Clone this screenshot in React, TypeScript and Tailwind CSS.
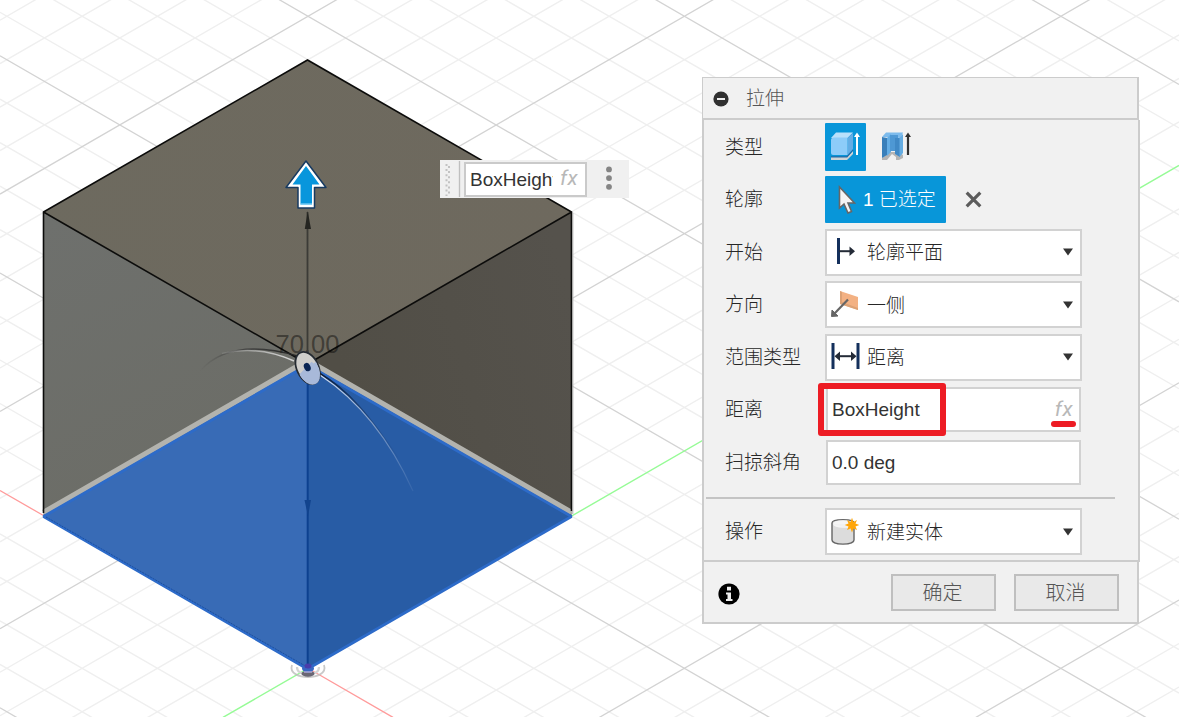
import type { ReactNode } from 'react';

const ORIGIN = { x: 308, y: 668.3 };
const SLOPE = 0.5774;
const STEP = 43.47;

function gridLines() {
  const minor: string[] = [];
  const major: string[] = [];
  for (let k = -32; k <= 18; k++) {
    const base = ORIGIN.y + k * STEP;
    const left = ORIGIN.x * SLOPE;
    const right = (1179 - ORIGIN.x) * SLOPE;
    const target = k % 5 === 0 ? major : minor;
    if (k === 0) continue;
    target.push(`M0 ${base - left}L1179 ${base + right}`);
    target.push(`M0 ${base + left}L1179 ${base - right}`);
  }
  return { minor: minor.join(''), major: major.join('') };
}

const grid = gridLines();

function Scene() {
  return (
    <svg className="absolute inset-0" width="1179" height="717" viewBox="0 0 1179 717" fill="none">
      <defs>
        <linearGradient id="topFace" x1="43" y1="60" x2="571" y2="240" gradientUnits="userSpaceOnUse">
          <stop offset="0" stopColor="#6d6a5f" />
          <stop offset="1" stopColor="#6e695e" />
        </linearGradient>
        <linearGradient id="leftFace" x1="43" y1="220" x2="180" y2="480" gradientUnits="userSpaceOnUse">
          <stop offset="0" stopColor="#6e706d" />
          <stop offset="1" stopColor="#6c6d67" />
        </linearGradient>
        <linearGradient id="rightFace" x1="340" y1="360" x2="571" y2="300" gradientUnits="userSpaceOnUse">
          <stop offset="0" stopColor="#514e46" />
          <stop offset="1" stopColor="#55524c" />
        </linearGradient>
        <linearGradient id="arcLeft" x1="200" y1="0" x2="300" y2="0" gradientUnits="userSpaceOnUse">
          <stop offset="0" stopColor="#333" stopOpacity="0" />
          <stop offset="0.5" stopColor="#333" stopOpacity="0.75" />
          <stop offset="1" stopColor="#222" />
        </linearGradient>
        <linearGradient id="arcLeftLight" x1="210" y1="0" x2="285" y2="0" gradientUnits="userSpaceOnUse">
          <stop offset="0" stopColor="#ccc" stopOpacity="0" />
          <stop offset="1" stopColor="#ddd" stopOpacity="0.9" />
        </linearGradient>
        <linearGradient id="arcRight" x1="320" y1="375" x2="400" y2="465" gradientUnits="userSpaceOnUse">
          <stop offset="0" stopColor="#0b1c38" />
          <stop offset="1" stopColor="#173d75" stopOpacity="0" />
        </linearGradient>
        <linearGradient id="arcRightLight" x1="320" y1="375" x2="413" y2="490" gradientUnits="userSpaceOnUse">
          <stop offset="0" stopColor="#d8e0ee" />
          <stop offset="1" stopColor="#b6c6e2" stopOpacity="0.1" />
        </linearGradient>
      </defs>

      <path d={grid.minor} stroke="#efefef" strokeWidth="1.4" />
      <path d={grid.major} stroke="#d3d3d3" strokeWidth="1.3" />
      <path d="M0 490.5L43 515.3M308 668.3L393 717.4" stroke="#ff9b9b" strokeWidth="1.3" />
      <path d="M223 717.4L308 668.3M571 516.4L1179 165.4" stroke="#96fb96" strokeWidth="1.4" />

      <path d="M307.5 60L571.5 212L307.5 364L43.5 212Z" fill="url(#topFace)" />
      <path d="M43.5 212L307.5 364V516L43.5 515Z" fill="url(#leftFace)" />
      <path d="M571.5 212L307.5 364V516L571.5 515Z" fill="url(#rightFace)" />
      <path d="M43.5 512.5L307.5 360.5L571.5 512.5" stroke="#b3b3ae" strokeWidth="5.5" />
      <path d="M307.5 365L571.5 516.5L307.5 668.5L43.5 516.5Z" fill="#386bb6" />
      <path d="M307.5 365L571.5 516.5L307.5 668.5Z" fill="#285ca5" />
      <path d="M43.5 516.5L307.5 365L571.5 516.5L307.5 669Z" stroke="#2d6bc9" strokeWidth="2.8" strokeLinejoin="bevel" />
      <path d="M46 517L307 667" stroke="#1e4f9c" strokeWidth="1" strokeDasharray="2 1" />
      <path d="M43.5 513V212L307.5 60L571.5 212V511M43.5 212L307.5 364L571.5 212" stroke="#0c0c0b" strokeWidth="1.6" />
      <path d="M572.8 213V514" stroke="#a9a9a7" strokeWidth="1" />

      <text x="275.5" y="353" fontFamily="Liberation Sans, sans-serif" fontSize="25.5" fill="#000" fillOpacity="0.43">70.00</text>
      <path d="M307.5 212V364" stroke="#3c3b37" strokeWidth="1.8" />
      <path d="M307.7 364V668" stroke="#0d4190" strokeWidth="2" />
      <path d="M307.7 211L311 229H304.8Z" fill="#252521" />
      <path d="M304.5 500H311L308 516Z" fill="#12448e" />

      <path d="M200 371C222 346 256 344 298 356" stroke="url(#arcLeft)" strokeWidth="1.3" />
      <path d="M222 353.5C248 347.5 272 351 294 361" stroke="url(#arcLeftLight)" strokeWidth="1.5" />
      <path d="M320 373.5C348 390 370 416 398 458" stroke="url(#arcRight)" strokeWidth="1.6" />
      <path d="M320 375C358 400 390 440 413 491" stroke="url(#arcRightLight)" strokeWidth="1.1" />

      <g transform="rotate(-26 307.7 368)">
        <ellipse cx="307.7" cy="368" rx="10.8" ry="17" fill="#cfcecb" stroke="#252b32" strokeWidth="1.7" />
        <path d="M297.5 371A10.2 16 0 0 0 317.8 366Z" fill="#a8b9d9" />
        <path d="M297.6 370A10.2 16 0 0 0 317.8 373L314 364Z" fill="#a8b9d9" />
        <ellipse cx="307.7" cy="367" rx="3.2" ry="4.3" fill="#0b2552" />
      </g>

      <path d="M306 161L326 187.5H314.5V208H298V187.5H286Z" fill="#fff" stroke="#173a61" strokeWidth="1.5" strokeLinejoin="round" />
      <path d="M306 166L319.5 184.5H312V204.5H300.5V184.5H292.5Z" fill="#0896dc" />
      <path d="M300.5 204H312" stroke="#83d3f8" strokeWidth="1.2" />

      <path d="M292 665C289 674 300 677 308 677C316 677 327 674 324 665" stroke="#bcbcbc" strokeWidth="1.8" opacity="0.8" />
      <path d="M297 667C297 672 302 674 308 674C314 674 319 672 319 667" stroke="#d4d4d4" strokeWidth="2.2" />
      <ellipse cx="308" cy="673.7" rx="6.5" ry="3" fill="#6a6774" />
      <ellipse cx="308" cy="668.5" rx="6" ry="4" fill="#3967c3" />
      <ellipse cx="308" cy="666" rx="3.5" ry="2.5" fill="#493dab" />
      <path d="M304 672H312" stroke="#c7b9df" strokeWidth="1.2" />
    </svg>
  );
}

function ExtrudeIcon() {
  return (
    <svg width="32" height="32" viewBox="0 0 32 32" fill="none">
      <path d="M1 27H17L23 21V24L17 30H1Z" fill="#cfd3d5" />
      <path d="M1 26.8H17L23 19.8" stroke="#236aa5" strokeWidth="1.2" />
      <path d="M1 8L6 2.5H23L17.5 8Z" fill="#b9e0fb" />
      <path d="M17.5 8L23 3V19L17.5 25Z" fill="#63ade5" />
      <path d="M1 10Q1 7.5 4 7.5H17.5V25H3Q1 25 1 23Z" fill="#8dccf9" />
      <path d="M27 25V5" stroke="#fff" strokeWidth="2" />
      <path d="M27 2.5L30 7H24Z" fill="#fff" />
    </svg>
  );
}

function ThinExtrudeIcon() {
  return (
    <svg width="32" height="32" viewBox="0 0 32 32" fill="none">
      <path d="M1 28L5 25L8 22H18L22 25V28L18 30H15V27L11 24L6 30H1Z" fill="#b4b4b4" />
      <path d="M1 7L5 2.5H22L20 8Z" fill="#7dbbec" />
      <path d="M1 7L6 8V25L1 28Z" fill="#397fba" />
      <path d="M6 8L10 4V22L6 26Z" fill="#63ade5" />
      <path d="M9 5H17V21H9Z" fill="#4e98d4" />
      <path d="M14 8H19V27L14 24Z" fill="#4089c6" />
      <path d="M18.5 8L22 4V23L18.5 27Z" fill="#65ace1" />
      <path d="M27 25V5" stroke="#303030" strokeWidth="2.2" />
      <path d="M27 2.5L30 7H24Z" fill="#303030" />
    </svg>
  );
}

function StartIcon() {
  return (
    <svg width="30" height="32" viewBox="0 0 30 32" fill="none">
      <path d="M7.5 2V28" stroke="#14305c" strokeWidth="3" />
      <path d="M8 15.2H20" stroke="#242b37" strokeWidth="2" />
      <path d="M18.5 10.5L24 15.2L18.5 20Z" fill="#242b37" />
    </svg>
  );
}

function DirectionIcon() {
  return (
    <svg width="30" height="32" viewBox="0 0 30 32" fill="none">
      <path d="M9 2L27 8V21L9 15Z" fill="#f3b183" />
      <path d="M9 2V15L27 21V19L11 13V3Z" fill="#dca276" />
      <path d="M17 10.5L4 24" stroke="#666" strokeWidth="2.2" />
      <path d="M.5 27.5L1 21L7 27Z" fill="#666" stroke="#666" />
    </svg>
  );
}

function DistanceIcon() {
  return (
    <svg width="30" height="32" viewBox="0 0 30 32" fill="none">
      <path d="M2 2V28M27 2V28" stroke="#14305c" strokeWidth="3" />
      <path d="M5 15.2H24" stroke="#242b37" strokeWidth="2" />
      <path d="M9 10.5L3.5 15.2L9 20ZM20 10.5L25.5 15.2L20 20Z" fill="#242b37" />
    </svg>
  );
}

function NewBodyIcon() {
  return (
    <svg width="30" height="32" viewBox="0 0 30 32" fill="none">
      <path d="M1 7C1 2.5 23 2.5 23 7V24C23 29.5 1 29.5 1 24Z" fill="#dcdcdc" stroke="#666" strokeWidth="1.4" />
      <ellipse cx="12" cy="8" rx="10" ry="3.8" fill="#f5f5f5" />
      <path d="M2 8L22 14V8Z" fill="#f1f1f1" />
      <path d="M21 1.8L22.5 6L26 4L24.5 7.6L28.3 9L24.5 10.5L26 14L22.5 12.5L21 16.5L19.5 12.5L16 14L17.5 10.5L13.7 9L17.5 7.6L16 4L19.5 6Z" fill="#ffa60a" />
    </svg>
  );
}

function Row({ label, children }: { label: string; children: ReactNode }) {
  return (
    <div className="flex h-[52.5px] shrink-0 items-center pl-[21px]">
      <div className="w-[100px] shrink-0 pt-px whitespace-nowrap">{label}</div>
      {children}
    </div>
  );
}

function Select({ icon, value }: { icon: ReactNode; value: string }) {
  return (
    <div className="flex h-[47px] w-[257px] items-center border-2 border-[#d2d2d2] bg-white pr-[6px] pl-[4px]">
      <span className="w-[36px] shrink-0">{icon}</span>
      <span className="grow pt-[2px]">{value}</span>
      <svg width="12" height="8" viewBox="0 0 12 8"><path d="M1 .5H11L6 7.5Z" fill="#333" /></svg>
    </div>
  );
}

function Fx() {
  return <span className="block font-['Roboto',sans-serif] text-[21px] leading-[24px] font-normal tracking-[0.5px] text-[#b8b8b8] italic">fx</span>;
}

function ExtrudePanel() {
  return (
    <section className="absolute top-[77px] left-[702px] flex h-[547px] w-[437px] flex-col bg-[#f1f1f1] text-[19px] leading-[28px] font-light text-[#262626]">
      <header className="flex h-[43px] shrink-0 items-center border border-r-2 border-b-2 border-[#cccccc] pt-[2px] pl-[9.5px] text-[#555555]">
        <svg width="16" height="16" viewBox="0 0 16 16"><circle cx="8" cy="8" r="7.6" fill="#303030" /><path d="M4 8H12" stroke="#eee" strokeWidth="2" /></svg>
        <span className="ml-[17.5px]">拉伸</span>
      </header>
      <div className="-mr-px flex h-[442px] shrink-0 flex-col border-r-2 border-b-2 border-l-2 border-[#cccccc] pt-px">
        <Row label="类型">
          <div className="flex h-[48px] w-[41px] items-center rounded-[1px] bg-[#0896d9] pb-[3px] pl-[5px]"><ExtrudeIcon /></div>
          <div className="ml-[15px] pb-[3px]"><ThinExtrudeIcon /></div>
        </Row>
        <Row label="轮廓">
          <div className="flex h-[47px] w-[121px] items-center rounded-[1px] bg-[#0896d9] text-white">
            <svg className="ml-[13px]" width="18" height="30" viewBox="0 0 18 30"><path d="M1.5 2V23L6 19L10 28L13.5 26.5L10 18H16.5Z" fill="#f4f4f4" stroke="#666" strokeWidth="1.6" /></svg>
            <span className="ml-[7px] pt-px font-normal whitespace-nowrap">1 <span className="font-light">已选定</span></span>
          </div>
          <svg className="ml-[18.5px]" width="17" height="17" viewBox="0 0 17 17"><path d="M1.7 1.7L15.3 15.3M15.3 1.7L1.7 15.3" stroke="#5c5c5c" strokeWidth="3.2" /></svg>
        </Row>
        <Row label="开始"><Select icon={<StartIcon />} value="轮廓平面" /></Row>
        <Row label="方向"><Select icon={<DirectionIcon />} value="一侧" /></Row>
        <Row label="范围类型"><Select icon={<DistanceIcon />} value="距离" /></Row>
        <Row label="距离">
          <div className="relative ml-px flex h-[45px] w-[255px] items-center justify-between border-2 border-[#d2d2d2] bg-white pr-[6px] pl-[4px]">
            <span className="font-normal text-[#333]">BoxHeight</span>
            <div className="pb-[2px]"><Fx /></div>
            <div className="absolute top-[-6px] left-[-10px] h-[53px] w-[128px] rounded-[3px] border-[6px] border-[#ed1c24]" />
            <div className="absolute right-[3px] bottom-[3px] h-[6px] w-[25px] rounded-full bg-[#ed1c24]" />
          </div>
        </Row>
        <Row label="扫掠斜角">
          <div className="ml-px flex h-[45px] w-[255px] items-center border-2 border-[#d2d2d2] bg-white pt-px pl-[4px]"><span className="font-normal text-[#333]">0.0 deg</span></div>
        </Row>
        <div className="mt-[8px] mb-[7px] ml-[2px] h-[2px] w-[409px] shrink-0 bg-[#c4c4c4]" />
        <Row label="操作"><Select icon={<NewBodyIcon />} value="新建实体" /></Row>
      </div>
      <footer className="flex grow items-center border-r-2 border-b-2 border-l-2 border-[#cccccc] pl-[14px] text-[20px] text-[#555555]">
        <svg className="mt-[3px]" width="22" height="22" viewBox="0 0 22 22"><circle cx="11" cy="11" r="10.6" fill="#000" /><path d="M9 3.8H13V7.5H9ZM8 9.5H13V16H14.5V18H8V16H9.5V11.5H8Z" fill="#eee" /></svg>
        <button className="ml-[151px] h-[37px] w-[105px] border-2 border-[#bfbfbf] bg-[#e9e9e9] pt-[2px] pr-[2px]">确定</button>
        <button className="ml-[18px] h-[37px] w-[105px] border-2 border-[#bfbfbf] bg-[#e9e9e9] pt-[2px] pr-[2px]">取消</button>
      </footer>
    </section>
  );
}

function FloatingInput() {
  return (
    <div className="absolute top-[160px] left-[440px] flex h-[38px] w-[189px] items-center bg-[#f0f0f0]">
      <svg width="24" height="38" viewBox="0 0 24 38" fill="none">
        <path d="M6.5 4V36" stroke="#c2c2c2" strokeWidth="2" strokeDasharray="2 3.1" />
        <path d="M9 6V36" stroke="#c2c2c2" strokeWidth="2" strokeDasharray="2 3.1" />
        <path d="M19.5 1V37" stroke="#bfbfbf" strokeWidth="1.4" />
      </svg>
      <div className="flex h-[35px] w-[123px] items-center border-2 border-[#cacaca] bg-white pr-[6px] pl-[4px] text-[19px] text-[#333]">
        <span className="mt-px w-[83px] shrink-0 overflow-hidden leading-[28px]">BoxHeight</span>
        <span className="ml-[7px] pb-[2px]"><Fx /></span>
      </div>
      <svg className="ml-[19px]" width="6" height="26" viewBox="0 0 6 26" fill="#858585"><circle cx="3" cy="3.4" r="2.9" /><circle cx="3" cy="12.1" r="2.9" /><circle cx="3" cy="20.8" r="2.9" /></svg>
    </div>
  );
}

export default function App() {
  return (
    <main className="relative h-[717px] w-[1179px] overflow-hidden bg-white font-['Liberation_Sans','Noto_Sans_CJK_SC',sans-serif]">
      <Scene />
      <FloatingInput />
      <ExtrudePanel />
    </main>
  );
}
